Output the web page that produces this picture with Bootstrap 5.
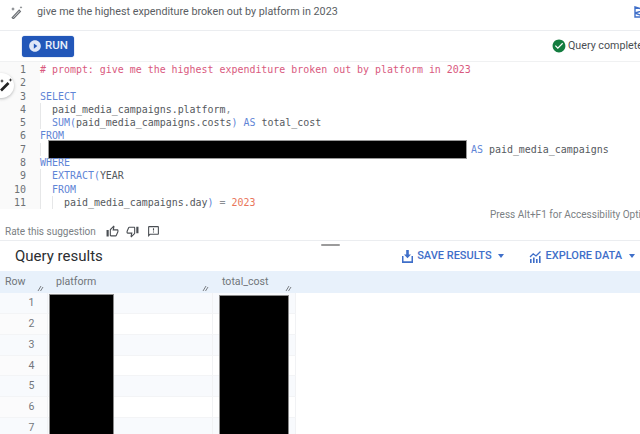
<!DOCTYPE html>
<html lang="en">
<head>
<meta charset="utf-8">
<title>Query results</title>
<link href="https://cdn.jsdelivr.net/npm/bootstrap@5.3.0/dist/css/bootstrap.min.css" rel="stylesheet">
<style>
html,body{height:434px;overflow:hidden;background:#fff}
body{font-family:Roboto,"Liberation Sans",sans-serif;color:#3c4043}
.prompt-bar{height:31px;padding:0 0 6px 10px;border-bottom:1px solid #ebedf0;font-size:10.75px;color:#5a5e63;gap:14px}
.prompt-end{margin-left:auto;width:6px;overflow:hidden;flex:none}
.tool-bar{height:31px;padding-left:22px;border-bottom:1px solid #f0f1f2}
.run-btn{height:21px;width:52px;padding:0;background:#2257b9;border:0;border-radius:3px;color:#e8eefa;font-size:11.5px;font-weight:500;gap:3px;box-shadow:0 0 1px #2257b9}
.run-btn:hover{background:#2257b9;color:#e8eefa}
.status{margin-left:auto;width:88px;white-space:nowrap;overflow:hidden;font-size:10.7px;color:#4a4e53;gap:2px;flex:none}
.editor{height:147px;overflow:hidden;font-family:"DejaVu Sans Mono","Liberation Mono",monospace;font-size:9.95px;line-height:13.3px}
.gutter{width:40px;flex:none;background:#fafafa;padding-right:14px;text-align:right;color:#6d7176;padding-top:1px}
.code{flex:1;padding-top:1px;color:#55595e;min-width:0}
.ln{height:13.3px;white-space:pre}
.ind{display:inline-block;width:12px;height:13.3px;border-left:1px solid #e6e7e8;vertical-align:top}
.kw{color:#5f85d6}.cm{color:#d9597e}.nu{color:#e9765a}.sy{color:#8a8e93}
.redact-inline{display:inline-block;background:#000;width:417px;height:17px;margin:-2px 5px -2px -3px;vertical-align:top;outline:1px solid #999}
.fab{position:absolute;left:-11px;top:11px;width:25px;height:25px;border-radius:50%;background:#fff;box-shadow:0 1px 3px rgba(60,64,67,.35)}
.fab svg{position:absolute;right:1px;top:5px}
.rate-row{height:32px;border-bottom:1px solid #ebedf0;font-size:10px;color:#7b7f84;padding-left:5px}
.rate-icons{margin-left:10px;gap:7.5px;color:#4a4e53}
.hint{position:absolute;left:490px;top:-2px;white-space:nowrap;width:150px;overflow:hidden}
.rate-line{align-self:flex-end;height:18px;display:flex;align-items:center}
.drag{position:absolute;left:321px;top:3px;width:19px;height:2px;background:#9b9b9b;border-radius:1px}
.res-bar{height:30px;padding:0 5px 0 15px;position:relative}
.res-title{font-size:15px;color:#2b2e31}
.res-act{color:#3f6fc9;font-size:11px;font-weight:500;gap:3px;white-space:nowrap;flex:none}
.act1{margin-left:auto}
.act2{margin-left:25px;gap:4px}
.caret-d{width:0;height:0;border:3.5px solid transparent;border-top:4px solid #3f6fc9;border-bottom:0;margin-left:3px;flex:none}
.tbl-wrap{position:relative;height:163px;overflow:hidden}
.res-table{table-layout:fixed;width:640px;margin:0;font-size:10.5px;border-collapse:collapse}
.res-table th{background:#e8f1fb;height:22px;padding:0 0 0 9px;font-weight:400;color:#70757a;border:0;position:relative;vertical-align:middle;font-size:10.6px}
.res-table th:first-child{padding-left:5px}
.res-table th:nth-child(3){padding-left:10px}
.res-table td{height:20.7px;padding:0;border:0;border-bottom:1px solid #f3f4f6;border-right:1px solid #f1f2f4;background:#fff;vertical-align:middle}
.res-table tr:nth-child(odd) td{background:#f8fafd}
.res-table td.num{text-align:right;padding-right:12px;color:#73777c;font-size:10.5px;background:#fbfbfc}
.res-table tr td.blank{background:#fff;border:0}
.grip{position:absolute;right:3px;bottom:1px;width:7px;height:8px}
.mask{position:absolute;background:#000;outline:1px solid #8a8a8a}
.mask-a{left:50px;top:24px;width:63px;height:200px}
.mask-b{left:220px;top:25px;width:68px;height:200px}
</style>
</head>
<body>
<div class="prompt-bar d-flex align-items-center">
  <svg width="13" height="13" viewBox="0 0 13 13" class="flex-shrink-0"><path d="M2.200 11.600 9.200 4.200l1.200 1.200-7 7.300z" fill="none" stroke="#6a6e73" stroke-width="1.200"/><path d="M3 1l.6 1.400L5 3l-1.400.6L3 5l-.6-1.400L1 3l1.400-.6zM11 0l.4 1 1 .4-1 .4-.4 1-.4-1-1-.4 1-.4z" fill="#6a6e73"/></svg>
  <span>give me the highest expenditure broken out by platform in 2023</span>
  <span class="prompt-end"><svg width="12" height="12" viewBox="0 0 12 12"><path d="M1 1l10 3-10 3zM1 7l10 4H1z" fill="none" stroke="#3f6fc9" stroke-width="1.400"/></svg></span>
</div>
<div class="tool-bar d-flex align-items-center">
  <button type="button" class="btn run-btn d-flex align-items-center justify-content-center">
    <svg width="14" height="14" viewBox="0 0 24 24"><path fill="#dfe7f7" d="M12 2C6.480 2 2 6.480 2 12s4.480 10 10 10 10-4.480 10-10S17.520 2 12 2zm-2 14.500v-9l6 4.500-6 4.500z"/></svg>
    RUN
  </button>
  <div class="status d-flex align-items-center">
    <svg width="14" height="14" viewBox="0 0 24 24" class="flex-shrink-0"><path fill="#137c3f" d="M12 1C5.900 1 1 5.900 1 12s4.900 11 11 11 11-4.900 11-11S18.100 1 12 1zm-2 16l-5-5 1.410-1.410L10 14.170l7.590-7.590L19 8l-9 9z"/></svg>
    <span>Query complete</span>
  </div>
</div>
<div class="editor d-flex position-relative">
  <div class="gutter">
    <div>1</div><div>2</div><div>3</div><div>4</div><div>5</div><div>6</div><div>7</div><div>8</div><div>9</div><div>10</div><div>11</div>
  </div>
  <div class="code">
    <div class="ln cm"># prompt: give me the highest expenditure broken out by platform in 2023</div>
    <div class="ln"></div>
    <div class="ln kw">SELECT</div>
    <div class="ln"><span class="ind"></span>paid_media_campaigns.platform<span class="sy">,</span></div>
    <div class="ln"><span class="ind"></span><span class="kw">SUM(</span>paid_media_campaigns.costs<span class="kw">)</span> <span class="kw">AS</span> total_cost</div>
    <div class="ln kw">FROM</div>
    <div class="ln"><span class="ind"></span><span class="redact-inline"></span><span class="kw">AS</span> paid_media_campaigns</div>
    <div class="ln kw">WHERE</div>
    <div class="ln"><span class="ind"></span><span class="kw">EXTRACT(</span>YEAR</div>
    <div class="ln"><span class="ind"></span><span class="kw">FROM</span></div>
    <div class="ln"><span class="ind"></span><span class="ind"></span>paid_media_campaigns.day<span class="kw">)</span> <span class="sy">=</span> <span class="nu">2023</span></div>
  </div>
  <div class="fab"><svg width="14" height="14" viewBox="0 0 14 14"><path d="M2 12.500 9.500 5" stroke="#222" stroke-width="2.600" fill="none"/><path d="M3 1l.6 1.400L5 3l-1.400.6L3 5l-.6-1.400L1 3l1.400-.6zM11.500 0l.5 1.500 1.500.5-1.500.5-.5 1.500-.5-1.500L9.500 2l1.500-.5z" fill="#222"/></svg></div>
</div>
<div class="rate-row d-flex align-items-center position-relative">
  <span class="hint">Press Alt+F1 for Accessibility Options</span>
  <div class="rate-line">
    <span>Rate this suggestion</span>
    <span class="rate-icons d-flex align-items-center">
      <svg width="13" height="13" viewBox="0 0 24 24"><path fill="currentColor" d="M9 21h9c.83 0 1.540-.5 1.840-1.220l3.020-7.050c.09-.23.14-.47.14-.73v-2c0-1.100-.9-2-2-2h-6.310l.95-4.570.03-.32c0-.41-.17-.79-.44-1.060L14.170 1 7.580 7.590C7.220 7.950 7 8.450 7 9v10c0 1.100.9 2 2 2zM9 9l4.340-4.340L12 10h9v2l-3 7H9V9zM1 9h4v12H1z"/></svg>
      <svg width="13" height="13" viewBox="0 0 24 24"><path fill="currentColor" d="M15 3H6c-.83 0-1.540.5-1.840 1.220l-3.020 7.050c-.09.23-.14.47-.14.73v2c0 1.100.9 2 2 2h6.310l-.95 4.570-.03.32c0 .41.17.79.44 1.060L9.830 23l6.590-6.590c.36-.36.58-.86.58-1.410V5c0-1.100-.9-2-2-2zm0 12l-4.340 4.340L12 14H3v-2l3-7h9v10zm4-12h4v12h-4z"/></svg>
      <svg width="13" height="13" viewBox="0 0 24 24"><path fill="currentColor" d="M20 2H4c-1.100 0-1.990.9-1.990 2L2 22l4-4h14c1.100 0 2-.9 2-2V4c0-1.100-.9-2-2-2zm0 14H5.170L4 17.170V4h16v12zM11 12h2v2h-2zm0-6h2v4h-2z"/></svg>
    </span>
  </div>
</div>
<div class="res-bar d-flex align-items-center">
  <span class="drag"></span>
  <span class="res-title">Query results</span>
  <span class="res-act act1 d-flex align-items-center">
    <svg width="13" height="13" viewBox="0 0 13 13" class="flex-shrink-0"><path fill="#3f6fc9" d="M5.200 0h2.600v4.500h2.200L6.500 8.200 3 4.500h2.200zM1 6h1.500v5.300h8V6H12v7H1z"/></svg>
    <span>SAVE RESULTS</span><span class="caret-d"></span>
  </span>
  <span class="res-act act2 d-flex align-items-center">
    <svg width="13" height="13" viewBox="0 0 13 13" class="flex-shrink-0"><path fill="#3f6fc9" d="M1 9h1.600v4H1zM4 7.500h1.600V13H4zM7 9h1.600v4H7zM10 6h1.600v7H10z"/><path d="M1 7l3.200-3.200L7 6l4.500-4.500" fill="none" stroke="#3f6fc9" stroke-width="1.300"/></svg>
    <span>EXPLORE DATA</span><span class="caret-d"></span>
  </span>
</div>
<div class="tbl-wrap">
  <table class="table res-table">
    <colgroup><col style="width:47px"><col style="width:165px"><col style="width:83px"><col></colgroup>
    <thead>
      <tr>
        <th>Row<svg class="grip" viewBox="0 0 7 8"><path d="M1 7 4 2M3.500 7 6 3" stroke="#7a7e83" fill="none"/></svg></th>
        <th>platform<svg class="grip" viewBox="0 0 7 8"><path d="M1 7 4 2M3.500 7 6 3" stroke="#7a7e83" fill="none"/></svg></th>
        <th>total_cost<svg class="grip" viewBox="0 0 7 8"><path d="M1 7 4 2M3.500 7 6 3" stroke="#7a7e83" fill="none"/></svg></th>
        <th></th>
      </tr>
    </thead>
    <tbody>
      <tr><td class="num">1</td><td></td><td></td><td class="blank"></td></tr>
      <tr><td class="num">2</td><td></td><td></td><td class="blank"></td></tr>
      <tr><td class="num">3</td><td></td><td></td><td class="blank"></td></tr>
      <tr><td class="num">4</td><td></td><td></td><td class="blank"></td></tr>
      <tr><td class="num">5</td><td></td><td></td><td class="blank"></td></tr>
      <tr><td class="num">6</td><td></td><td></td><td class="blank"></td></tr>
      <tr><td class="num">7</td><td></td><td></td><td class="blank"></td></tr>
    </tbody>
  </table>
  <div class="mask mask-a"></div>
  <div class="mask mask-b"></div>
</div>
<script src="https://cdn.jsdelivr.net/npm/bootstrap@5.3.0/dist/js/bootstrap.bundle.min.js"></script>
</body>
</html>
